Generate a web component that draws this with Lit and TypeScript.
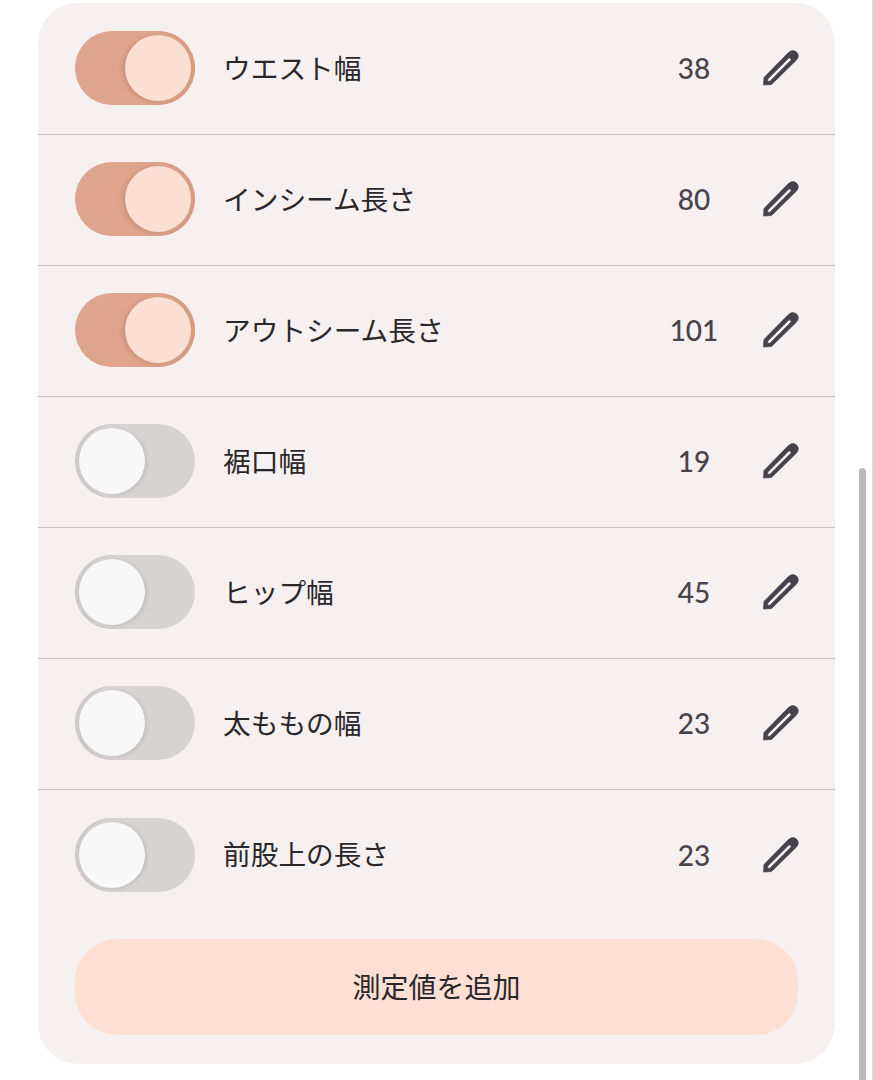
import { LitElement, html, css, svg } from 'lit';
import { customElement } from 'lit/decorators.js';

interface Measure {
  name: string;
  value: number;
  on: boolean;
}

const MEASURES: Measure[] = [
  { name: 'ウエスト幅', value: 38, on: true },
  { name: 'インシーム長さ', value: 80, on: true },
  { name: 'アウトシーム長さ', value: 101, on: true },
  { name: '裾口幅', value: 19, on: false },
  { name: 'ヒップ幅', value: 45, on: false },
  { name: '太ももの幅', value: 23, on: false },
  { name: '前股上の長さ', value: 23, on: false },
];

// solid cap and outline, with the slit cut out of the body
const pencil = svg`
  <path fill-rule="evenodd" fill="currentColor" stroke="currentColor" stroke-width="0.7" stroke-linejoin="round"
    d="M1.5 36 L2 28.5 L26 4 Q29 1 32 1.7 Q36 3 36.3 6.5 Q36.5 9 34 11.5 L9.5 35.5 Z
       M5.6 32.4 L5.8 30 L27.2 8.6 L29.4 10.8 L8 32.2 Z" />
`;

@customElement('app-root')
export class AppRoot extends LitElement {
  static styles = css`
    :host {
      display: block;
      box-sizing: border-box;
      height: 1080px;
      overflow: hidden;
      position: relative;
      background: #ffffff;
      border-right: 1px solid #dcdcdc;
      font-family: 'Noto Sans CJK JP', 'Noto Sans', sans-serif;
      color: #38343a;
    }

    .page {
      padding: 3px 38px 0 38px;
    }

    .card {
      box-sizing: border-box;
      width: 797px;
      height: 1061px;
      padding-top: 1px;
      background: #f6f0f0;
      border-radius: 40px;
    }

    .row {
      box-sizing: border-box;
      height: 131px;
      padding: 0 35px 0 37px;
      display: flex;
      align-items: center;
      border-bottom: 1px solid #c9c4c4;
    }

    .row.last {
      border-bottom: none;
    }

    .toggle {
      box-sizing: border-box;
      flex: none;
      width: 120px;
      height: 74px;
      margin-bottom: 2px;
      border-radius: 37px;
      padding: 4px;
      display: flex;
      background: #dea48c;
      justify-content: flex-end;
      box-shadow: inset -4px 0 0 #d89d85;
    }

    .toggle.off {
      background: #d8d3d3;
      justify-content: flex-start;
      box-shadow: inset 4px 0 0 #cfcaca;
    }

    .knob {
      width: 66px;
      height: 66px;
      border-radius: 50%;
      background: #fbdfd3;
      box-shadow: -2px 1px 4px rgba(120, 70, 50, 0.22);
    }

    .toggle.off .knob {
      background: #f9f8f8;
      box-shadow: 2px 1px 4px rgba(0, 0, 0, 0.1);
    }

    .name {
      flex: 1;
      margin-left: 28px;
      margin-bottom: 5px;
      font-size: 27.7px;
      line-height: 40px;
      color: #2a272b;
    }

    .value {
      width: 80px;
      margin-right: 28px;
      margin-bottom: 2px;
      text-align: center;
      font-family: 'Lato', 'Noto Sans', sans-serif;
      font-size: 28px;
      font-weight: 500;
      line-height: 40px;
      color: #47434a;
    }

    .edit {
      flex: none;
      width: 38px;
      height: 38px;
      margin-bottom: 2px;
      color: #47414c;
    }

    .add {
      display: flex;
      align-items: center;
      justify-content: center;
      box-sizing: border-box;
      width: 723px;
      height: 96px;
      margin: 18px 0 0 37px;
      padding-bottom: 2px;
      border-radius: 42px;
      background: #fde0d3;
      font-size: 28px;
      color: #2a272b;
    }

    .scrollbar {
      position: absolute;
      left: 859px;
      top: 468px;
      width: 7px;
      height: 612px;
      border-radius: 4px 4px 0 0;
      background: #bababa;
    }
  `;

  private renderRow(m: Measure, last: boolean) {
    return html`
      <div class="row ${last ? 'last' : ''}">
        <div class="toggle ${m.on ? 'on' : 'off'}"><div class="knob"></div></div>
        <div class="name">${m.name}</div>
        <div class="value">${m.value}</div>
        <svg class="edit" viewBox="0 0 38 38">${pencil}</svg>
      </div>
    `;
  }

  render() {
    return html`
      <div class="page">
        <div class="card">
          ${MEASURES.map((m, i) => this.renderRow(m, i === MEASURES.length - 1))}
          <div class="add">測定値を追加</div>
        </div>
      </div>
      <div class="scrollbar"></div>
    `;
  }
}
